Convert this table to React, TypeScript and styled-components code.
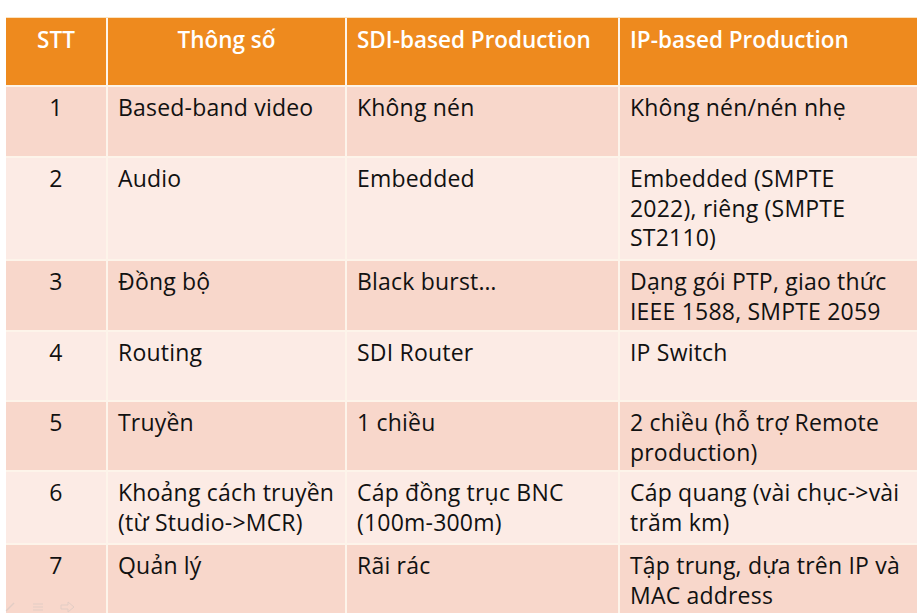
import React from "react";
import styled, { createGlobalStyle } from "styled-components";

const Global = createGlobalStyle`
  html, body { margin: 0; padding: 0; background: #ffffff; }
  body { font-family: "Open Sans", "Liberation Sans", Arial, sans-serif; }
`;

const Page = styled.div`
  position: relative;
  width: 920px;
  height: 615px;
  overflow: hidden;
  background: #ffffff;
  padding: 17px 0 0 6px;
  box-sizing: border-box;
`;

const Table = styled.div`
  display: grid;
  grid-template-columns: 100px 237px 271px 297px;
  grid-template-rows: 67px 69px 101px 69px 68px 68px 71px 68px;
  gap: 2px;
  width: 911px;
  background: #fdf4ea;
  border-top: 1px solid #fbe3c0;
  box-sizing: border-box;
`;

const Cell = styled.div<{ $tone: "head" | "dark" | "light"; $center?: boolean }>`
  background: ${(p) =>
    p.$tone === "head" ? "#ee8a1e" : p.$tone === "dark" ? "#f8d7cb" : "#fcebe5"};
  color: ${(p) => (p.$tone === "head" ? "#ffffff" : "#111111")};
  font-size: ${(p) => (p.$tone === "head" ? "22.5px" : "23px")};
  font-weight: ${(p) => (p.$tone === "head" ? 600 : 400)};
  line-height: 29.5px;
  letter-spacing: ${(p) => (p.$tone === "head" ? "0" : "0.2px")};
  text-align: ${(p) => (p.$center ? "center" : "left")};
  padding: ${(p) => (p.$tone === "head" ? "7px 10px 0" : "6px 10px 0")};
  white-space: nowrap;
  box-sizing: border-box;
`;

const Controls = styled.div`
  position: absolute;
  left: 4px;
  bottom: 2px;
  display: flex;
  gap: 16px;
  opacity: 0.35;
`;

type Row = { stt: string; name: string[]; sdi: string[]; ip: string[] };

const rows: Row[] = [
  { stt: "1", name: ["Based-band video"], sdi: ["Không nén"], ip: ["Không nén/nén nhẹ"] },
  {
    stt: "2",
    name: ["Audio"],
    sdi: ["Embedded"],
    ip: ["Embedded (SMPTE", "2022), riêng (SMPTE", "ST2110)"],
  },
  {
    stt: "3",
    name: ["Đồng bộ"],
    sdi: ["Black burst…"],
    ip: ["Dạng gói PTP, giao thức", "IEEE 1588, SMPTE 2059"],
  },
  { stt: "4", name: ["Routing"], sdi: ["SDI Router"], ip: ["IP Switch"] },
  {
    stt: "5",
    name: ["Truyền"],
    sdi: ["1 chiều"],
    ip: ["2 chiều (hỗ trợ Remote", "production)"],
  },
  {
    stt: "6",
    name: ["Khoảng cách truyền", "(từ Studio->MCR)"],
    sdi: ["Cáp đồng trục BNC", "(100m-300m)"],
    ip: ["Cáp quang (vài chục->vài", "trăm km)"],
  },
  {
    stt: "7",
    name: ["Quản lý"],
    sdi: ["Rãi rác"],
    ip: ["Tập trung, dựa trên IP và", "MAC address"],
  },
];

const Lines = ({ lines }: { lines: string[] }) => (
  <>
    {lines.map((l, i) => (
      <React.Fragment key={i}>
        {i > 0 && <br />}
        {l}
      </React.Fragment>
    ))}
  </>
);

export default function App() {
  return (
    <>
      <Global />
      <Page>
        <Table>
          <Cell $tone="head" $center>STT</Cell>
          <Cell $tone="head" $center>Thông số</Cell>
          <Cell $tone="head">SDI-based Production</Cell>
          <Cell $tone="head">IP-based Production</Cell>
          {rows.map((r, i) => {
            const tone = i % 2 === 0 ? "dark" : "light";
            return (
              <React.Fragment key={r.stt}>
                <Cell $tone={tone} $center>{r.stt}</Cell>
                <Cell $tone={tone}><Lines lines={r.name} /></Cell>
                <Cell $tone={tone}><Lines lines={r.sdi} /></Cell>
                <Cell $tone={tone}><Lines lines={r.ip} /></Cell>
              </React.Fragment>
            );
          })}
        </Table>
        <Controls>
          <svg width="12" height="12" viewBox="0 0 12 12">
            <path d="M2 10 L10 2" stroke="#bbb" strokeWidth="1.5" fill="none" />
          </svg>
          <svg width="12" height="12" viewBox="0 0 12 12">
            <path d="M1 3 H11 M1 6 H11 M1 9 H11" stroke="#bbb" strokeWidth="1.2" fill="none" />
          </svg>
          <svg width="16" height="12" viewBox="0 0 16 12">
            <path d="M1 4 H8 V1 L14 6 L8 11 V8 H1 Z" stroke="#bbb" strokeWidth="1" fill="none" />
          </svg>
        </Controls>
      </Page>
    </>
  );
}
